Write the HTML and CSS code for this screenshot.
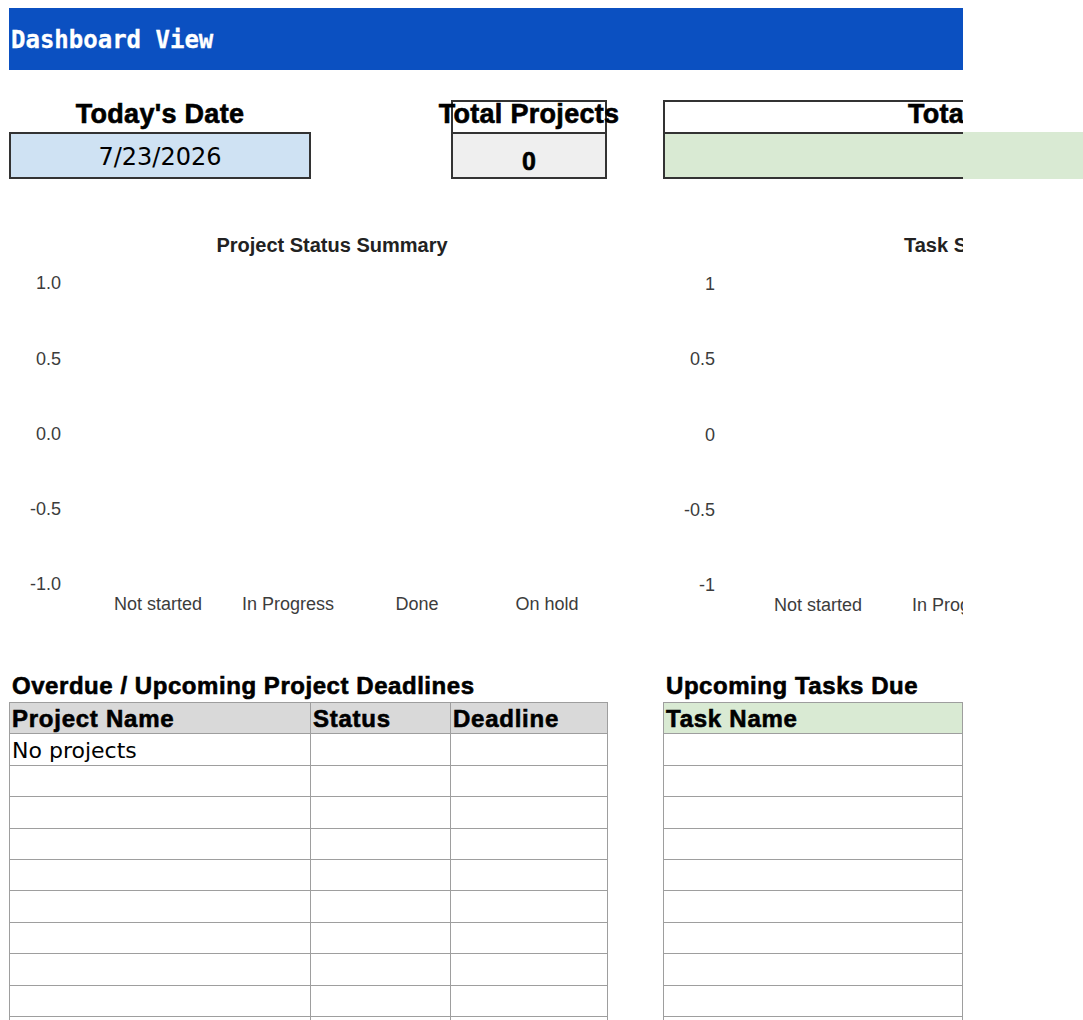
FILE: index.html
```html
<html>

<head>
  <title>Dashboard View</title>
  <meta charset="utf-8">
  <link rel="stylesheet" href="styles.css">
</head>

<body>
  <div class="sheet">
    <div class="banner">Dashboard View</div>

    <div class="stats">
      <div class="stat-label today-label">Today's Date</div>
      <div class="stat-value today-value">7/23/2026</div>

      <div class="stat-label boxed projects-label">Total Projects</div>
      <div class="stat-value boxed projects-value">0</div>

      <div class="stat-label tasks-label"><span>Total Tasks</span></div>
      <div class="stat-value tasks-value"></div>
      <div class="tasks-spill"></div>
    </div>

    <div class="charts">
      <svg class="chart" width="598" height="440" viewBox="0 0 598 440">
        <text class="chart-title" x="323" y="52" text-anchor="middle">Project Status Summary</text>
        <g class="axis" text-anchor="end">
          <text x="52" y="89">1.0</text>
          <text x="52" y="165">0.5</text>
          <text x="52" y="240">0.0</text>
          <text x="52" y="315">-0.5</text>
          <text x="52" y="390">-1.0</text>
        </g>
        <g class="axis" text-anchor="middle">
          <text x="149" y="410">Not started</text>
          <text x="279" y="410">In Progress</text>
          <text x="408" y="410">Done</text>
          <text x="538" y="410">On hold</text>
        </g>
      </svg>
      <div></div>
      <svg class="chart" width="300" height="440" viewBox="0 0 300 440">
        <text class="chart-title" x="241" y="52">Task Status Summary</text>
        <g class="axis" text-anchor="end">
          <text x="52" y="90">1</text>
          <text x="52" y="165">0.5</text>
          <text x="52" y="241">0</text>
          <text x="52" y="316">-0.5</text>
          <text x="52" y="391">-1</text>
        </g>
        <g class="axis" text-anchor="middle">
          <text x="155" y="411">Not started</text>
          <text x="295" y="411">In Progress</text>
        </g>
      </svg>
    </div>

    <div class="lists">
      <div>
        <div class="list-title">Overdue / Upcoming Project Deadlines</div>
        <table class="grid projects">
          <colgroup>
            <col style="width:301px">
            <col style="width:140px">
            <col style="width:157px">
          </colgroup>
          <tr class="head"><th>Project Name</th><th>Status</th><th>Deadline</th></tr>
          <tr><td>No projects</td><td></td><td></td></tr>
          <tr><td></td><td></td><td></td></tr>
          <tr><td></td><td></td><td></td></tr>
          <tr><td></td><td></td><td></td></tr>
          <tr><td></td><td></td><td></td></tr>
          <tr><td></td><td></td><td></td></tr>
          <tr><td></td><td></td><td></td></tr>
          <tr><td></td><td></td><td></td></tr>
          <tr><td></td><td></td><td></td></tr>
          <tr><td></td><td></td><td></td></tr>
        </table>
      </div>
      <div></div>
      <div>
        <div class="list-title">Upcoming Tasks Due</div>
        <table class="grid tasks">
          <tr class="head"><th>Task Name</th></tr>
          <tr><td></td></tr>
          <tr><td></td></tr>
          <tr><td></td></tr>
          <tr><td></td></tr>
          <tr><td></td></tr>
          <tr><td></td></tr>
          <tr><td></td></tr>
          <tr><td></td></tr>
          <tr><td></td></tr>
          <tr><td></td></tr>
        </table>
      </div>
    </div>
  </div>
</body>

</html>
```

FILE: styles.css
```css
body {
  margin: 0;
  width: 1083px;
  height: 1020px;
  overflow: hidden;
  background: white;
  color: black;
  font-family: 'Liberation Sans', Arial, sans-serif;
}

.sheet {
  padding: 8px 0 0 9px;
}

.banner {
  width: 954px;
  height: 62px;
  box-sizing: border-box;
  padding: 2px 0 0 2px;
  display: flex;
  align-items: center;
  background-color: #0b50c1;
  color: white;
  font: bold 24px 'DejaVu Sans Mono', monospace;
  -webkit-text-stroke: 0.3px white;
}

/* top row of summary boxes */
.stats {
  display: grid;
  grid-template-columns: 302px 140px 156px 56px 300px 120px;
  grid-template-rows: 32px 47px;
  margin-top: 30px;
}

.stat-label {
  display: flex;
  justify-content: center;
  align-items: flex-end;
  box-sizing: border-box;
  padding-bottom: 4px;
  font-size: 27px;
  font-weight: bold;
  line-height: 27px;
  letter-spacing: 0.3px;
  white-space: nowrap;
  -webkit-text-stroke: 0.6px black;
}

.stat-value {
  display: flex;
  justify-content: center;
  align-items: flex-end;
  box-sizing: border-box;
  border: 2px solid #333;
}

.today-label { grid-column: 1; grid-row: 1; }

.today-value {
  grid-column: 1;
  grid-row: 2;
  background-color: #cfe2f3;
  padding-bottom: 8px;
  font: 24px 'DejaVu Sans', sans-serif;
  line-height: 24px;
}

.projects-label {
  grid-column: 3;
  grid-row: 1;
  border: 2px solid #333;
  border-bottom: none;
}

.projects-value {
  grid-column: 3;
  grid-row: 2;
  background-color: #efefef;
  padding-bottom: 3px;
  font-size: 25px;
  font-weight: bold;
  line-height: 25px;
  -webkit-text-stroke: 0.6px black;
}

.tasks-label {
  grid-column: 5;
  grid-row: 1;
  justify-content: flex-start;
  overflow: hidden;
  border-top: 2px solid #333;
  border-left: 2px solid #333;
  padding-left: 243px;
}

.tasks-value {
  grid-column: 5;
  grid-row: 2;
  background-color: #d9ead3;
  border-right: none;
}

.tasks-spill {
  grid-column: 6;
  grid-row: 2;
  background-color: #d9ead3;
}

/* charts */
.charts {
  display: grid;
  grid-template-columns: 598px 56px 300px;
  margin-top: 21px;
}

.chart {
  display: block;
}

.chart-title {
  font: bold 20px 'Liberation Sans', Arial, sans-serif;
  fill: #222;
}

.axis text {
  font: 18px 'Liberation Sans', Arial, sans-serif;
  fill: #3c3c3c;
}

/* lists at the bottom */
.lists {
  display: grid;
  grid-template-columns: 598px 56px 300px;
}

.list-title {
  height: 62px;
  box-sizing: border-box;
  display: flex;
  align-items: flex-end;
  padding: 0 0 4px 3px;
  font-size: 24px;
  font-weight: bold;
  line-height: 24px;
  letter-spacing: 0.55px;
  white-space: nowrap;
  -webkit-text-stroke: 0.6px black;
}

.grid {
  border-collapse: collapse;
  table-layout: fixed;
}

.projects { width: 598px; }
.tasks { width: 300px; }

.grid tr {
  height: 31.4px;
}

.grid th,
.grid td {
  border: 1px solid #9e9e9e;
  padding: 0 0 3px 2px;
  vertical-align: bottom;
  text-align: left;
  white-space: nowrap;
  overflow: hidden;
}

.grid th {
  background-color: #d9d9d9;
  font-size: 24px;
  line-height: 24px;
  letter-spacing: 0.75px;
  padding-bottom: 2px;
  -webkit-text-stroke: 0.6px black;
}

.tasks th {
  background-color: #d9ead3;
}

.grid td {
  font: 22px 'DejaVu Sans', sans-serif;
  line-height: 22px;
}
```
